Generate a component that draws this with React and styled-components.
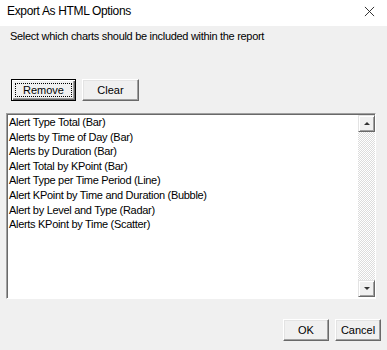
import styled, { createGlobalStyle } from "styled-components";

const charts = [
  "Alert Type Total (Bar)",
  "Alerts by Time of Day (Bar)",
  "Alerts by Duration (Bar)",
  "Alert Total by KPoint (Bar)",
  "Alert Type per Time Period (Line)",
  "Alert KPoint by Time and Duration (Bubble)",
  "Alert by Level and Type (Radar)",
  "Alerts KPoint by Time (Scatter)",
];

const GlobalStyle = createGlobalStyle`
  body {
    margin: 0;
    background: #f0f0f0;
    font-family: "Liberation Sans", Arial, sans-serif;
  }
`;

const App = () => {
  return (
    <>
      <GlobalStyle />
      <Window>
        <TitleBar>
          <Title>Export As HTML Options</Title>
          <CloseIcon viewBox="0 0 12 12">
            <path d="M1 1 L11 11 M11 1 L1 11" stroke="#222" strokeWidth="1" />
          </CloseIcon>
        </TitleBar>
        <Body>
          <Prompt>Select which charts should be included within the report</Prompt>
          <ButtonRow>
            <DefaultButton>
              <Focus>Remove</Focus>
            </DefaultButton>
            <Button>Clear</Button>
          </ButtonRow>
          <ListBox>
            <List>
              {charts.map((c) => (
                <Item key={c}>{c}</Item>
              ))}
            </List>
            <ScrollBar>
              <ArrowButton>
                <Arrow $up />
              </ArrowButton>
              <Track />
              <ArrowButton>
                <Arrow />
              </ArrowButton>
            </ScrollBar>
          </ListBox>
          <Footer>
            <Button $w={46}>OK</Button>
            <Button $w={46}>Cancel</Button>
          </Footer>
        </Body>
      </Window>
    </>
  );
};

const Window = styled.div`
  width: 387px;
  height: 350px;
  display: flex;
  flex-direction: column;
  background: #f0f0f0;
`;

const TitleBar = styled.div`
  height: 26px;
  background: #ffffff;
  display: flex;
  align-items: center;
  justify-content: space-between;
  padding: 0 12px 4px 7px;
  box-sizing: border-box;
`;

const Title = styled.div`
  font-size: 12px;
  letter-spacing: -0.35px;
  color: #000;
`;

const CloseIcon = styled.svg`
  width: 11px;
  height: 11px;
`;

const Body = styled.div`
  flex: 1;
  display: flex;
  flex-direction: column;
  padding: 4px 6px 0 6px;
`;

const Prompt = styled.div`
  font-size: 11px;
  color: #000;
  padding-left: 4px;
  letter-spacing: -0.3px;
`;

const ButtonRow = styled.div`
  display: flex;
  gap: 6px;
  margin-top: 37px;
  padding-left: 5px;
`;

const Button = styled.div`
  width: ${(p) => (p.$w ? p.$w : 57)}px;
  height: 22px;
  box-sizing: border-box;
  display: flex;
  align-items: center;
  justify-content: center;
  font-size: 11px;
  color: #000;
  background: #f0f0f0;
  border-top: 1px solid #ffffff;
  border-left: 1px solid #ffffff;
  border-right: 1px solid #696969;
  border-bottom: 1px solid #696969;
  box-shadow: inset -1px -1px 0 #a0a0a0, inset 1px 1px 0 #e3e3e3;
`;

const DefaultButton = styled(Button)`
  width: 65px;
  border: 1px solid #000;
  box-shadow: inset 1px 1px 0 #ffffff, inset -1px -1px 0 #696969,
    inset -2px -2px 0 #a0a0a0;
  padding: 3px;
`;

const Focus = styled.div`
  width: 100%;
  height: 100%;
  box-sizing: border-box;
  border: 1px dotted #000;
  display: flex;
  align-items: center;
  justify-content: center;
`;

const ListBox = styled.div`
  margin-top: 15px;
  height: 184px;
  display: flex;
  box-sizing: border-box;
  background: #fff;
  border-top: 1px solid #a0a0a0;
  border-left: 1px solid #a0a0a0;
  border-right: 1px solid #ffffff;
  border-bottom: 1px solid #ffffff;
  box-shadow: inset 1px 1px 0 #696969;
  margin-right: 5px;
  margin-top: 12px;
  height: 186px;
`;

const List = styled.div`
  flex: 1;
  padding: 1px 0 0 2px;
`;

const Item = styled.div`
  font-size: 11px;
  line-height: 14.6px;
  color: #000;
  letter-spacing: -0.3px;
`;

const ScrollBar = styled.div`
  width: 17px;
  display: flex;
  flex-direction: column;
  padding: 1px 0 1px 0;
`;

const ArrowButton = styled.div`
  height: 17px;
  box-sizing: border-box;
  background: #f0f0f0;
  display: flex;
  align-items: center;
  justify-content: center;
  border-top: 1px solid #e3e3e3;
  border-left: 1px solid #e3e3e3;
  border-right: 1px solid #696969;
  border-bottom: 1px solid #696969;
  box-shadow: inset 1px 1px 0 #ffffff, inset -1px -1px 0 #a0a0a0;
`;

const Arrow = styled.div`
  width: 0;
  height: 0;
  border-left: 3.5px solid transparent;
  border-right: 3.5px solid transparent;
  ${(p) =>
    p.$up
      ? "border-bottom: 3.5px solid #333;"
      : "border-top: 3.5px solid #333;"}
`;

const Track = styled.div`
  flex: 1;
  background-color: #ffffff;
  background-image: repeating-conic-gradient(
    #dcdcdc 0 25%,
    #ffffff 0 50%
  );
  background-size: 2px 2px;
`;

const Footer = styled.div`
  display: flex;
  justify-content: flex-end;
  gap: 6px;
  margin-top: 20px;
  padding-right: 0;
`;

export default App;
